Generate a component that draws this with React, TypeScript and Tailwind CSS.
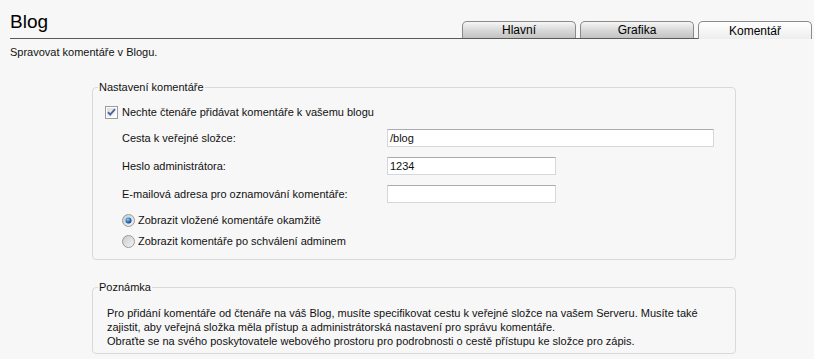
import React from "react";

function Checkbox() {
  return (
    <svg width="13" height="13" viewBox="0 0 13 13" className="shrink-0">
      <defs>
        <linearGradient id="cbg" x1="0" y1="0" x2="1" y2="1">
          <stop offset="0" stopColor="#dcdcdc" />
          <stop offset="1" stopColor="#ffffff" />
        </linearGradient>
      </defs>
      <rect x="0.5" y="0.5" width="12" height="12" fill="#ffffff" stroke="#9a9b9b" />
      <rect x="2" y="2" width="9" height="9" fill="url(#cbg)" />
      <path d="M3 6.2 L5.2 8.6 L10 3.2" fill="none" stroke="#4c61a0" strokeWidth="1.8" />
    </svg>
  );
}

function Radio({ checked }: { checked?: boolean }) {
  return (
    <svg width="13" height="13" viewBox="0 0 13 13" className="shrink-0">
      <defs>
        <linearGradient id="rbg" x1="0" y1="0" x2="1" y2="1">
          <stop offset="0" stopColor="#c9c9c9" />
          <stop offset="1" stopColor="#f6f6f6" />
        </linearGradient>
        <radialGradient id="rdot" cx="0.4" cy="0.35" r="0.7">
          <stop offset="0" stopColor="#8fd0ff" />
          <stop offset="0.5" stopColor="#2a7fd4" />
          <stop offset="1" stopColor="#14365e" />
        </radialGradient>
      </defs>
      <circle cx="6.5" cy="6.5" r="6" fill="url(#rbg)" stroke="#9a9a9a" />
      {checked && <circle cx="6.5" cy="6.5" r="3" fill="url(#rdot)" />}
    </svg>
  );
}

function Tab({ label, active }: { label: string; active?: boolean }) {
  return active ? (
    <div className="w-[114px] h-[18px] -mb-px rounded-t-[5px] border border-b-0 border-[#8a8a8a] bg-gradient-to-b from-[#ffffff] to-[#ededed] flex items-center justify-center text-[12px] leading-none text-black">
      {label}
    </div>
  ) : (
    <div className="w-[114px] h-[17px] rounded-t-[5px] border border-b-0 border-[#8a8a8a] bg-gradient-to-b from-[#f6f6f6] via-[#d9d9d9] to-[#c3c3c3] flex items-center justify-center text-[12px] leading-none text-black">
      {label}
    </div>
  );
}

export default function App() {
  return (
    <div className="min-h-screen w-[814px] bg-[#f7f7f7] text-[11px] leading-[14px] text-[#111] font-['Liberation_Sans',Arial,sans-serif]">
      <div className="ml-[10px] mr-[2px] h-[39px] flex items-end justify-between border-b border-[#5a5a5a]">
        <div className="self-start pt-[11px] text-[19px] leading-[22px] text-black">Blog</div>
        <div className="flex items-end gap-[4px]">
          <Tab label="Hlavní" />
          <Tab label="Grafika" />
          <Tab label="Komentář" active />
        </div>
      </div>
      <div className="pl-[10px] pt-[6px]">Spravovat komentáře v Blogu.</div>

      <fieldset className="mt-[21px] ml-[92px] w-[644px] border border-[#d6dadd] rounded-[4px] p-0">
        <legend className="ml-[5px] px-[1px]">Nastavení komentáře</legend>
        <div className="pt-[11px] pl-[12px] pb-[11px]">
          <div className="flex items-center gap-[4px] h-[14px]">
            <Checkbox />
            <span>Nechte čtenáře přidávat komentáře k vašemu blogu</span>
          </div>
          <div className="mt-[10px] pl-[17px] grid grid-cols-[265px_1fr] gap-y-[10px] items-center">
            <span>Cesta k veřejné složce:</span>
            <div className="w-[327px] h-[18px] bg-white border border-[#d4d8dc] border-t-[#a9abae] pl-[2px] flex items-center">/blog</div>
            <span>Heslo administrátora:</span>
            <div className="w-[169px] h-[18px] bg-white border border-[#d4d8dc] border-t-[#a9abae] pl-[2px] flex items-center">1234</div>
            <span>E-mailová adresa pro oznamování komentáře:</span>
            <div className="w-[169px] h-[18px] bg-white border border-[#d4d8dc] border-t-[#a9abae] pl-[2px] flex items-center"></div>
          </div>
          <div className="mt-[10px] pl-[17px] flex flex-col gap-[7px]">
            <div className="flex items-center gap-[3px] h-[14px]">
              <Radio checked />
              <span>Zobrazit vložené komentáře okamžitě</span>
            </div>
            <div className="flex items-center gap-[3px] h-[14px]">
              <Radio />
              <span>Zobrazit komentáře po schválení adminem</span>
            </div>
          </div>
        </div>
      </fieldset>

      <fieldset className="mt-[20px] ml-[92px] w-[644px] border border-[#d6dadd] rounded-[4px] p-0">
        <legend className="ml-[5px] px-[1px]">Poznámka</legend>
        <div className="pt-[12px] pl-[14px] pr-[10px] pb-[5px] leading-[14px]">
          <div>Pro přidání komentáře od čtenáře na váš Blog, musíte specifikovat cestu k veřejné složce na vašem Serveru. Musíte také</div>
          <div>zajistit, aby veřejná složka měla přístup a administrátorská nastavení pro správu komentáře.</div>
          <div>Obraťte se na svého poskytovatele webového prostoru pro podrobnosti o cestě přístupu ke složce pro zápis.</div>
        </div>
      </fieldset>
    </div>
  );
}
